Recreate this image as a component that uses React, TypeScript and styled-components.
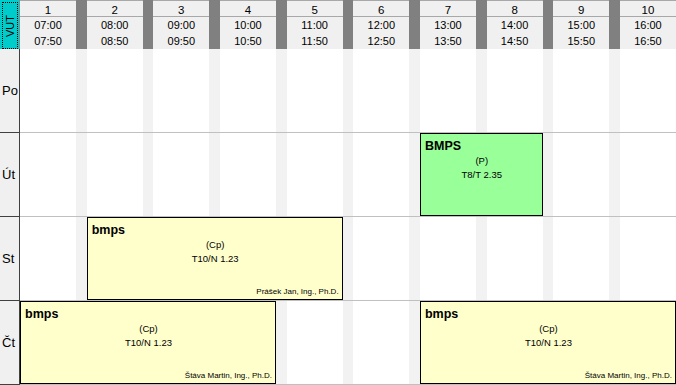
import React, { Fragment } from "react";
import styled, { createGlobalStyle } from "styled-components";

const GlobalStyle = createGlobalStyle`
  html, body {
    margin: 0;
    padding: 0;
    background: #ffffff;
    overflow: hidden;
  }
  body {
    font-family: "Liberation Sans", Arial, sans-serif;
    color: #000;
  }
`;

const COLS = "20px repeat(10, 56px 10.6667px)";

type Period = { n: number; start: string; end: string };

const periods: Period[] = [
  { n: 1, start: "07:00", end: "07:50" },
  { n: 2, start: "08:00", end: "08:50" },
  { n: 3, start: "09:00", end: "09:50" },
  { n: 4, start: "10:00", end: "10:50" },
  { n: 5, start: "11:00", end: "11:50" },
  { n: 6, start: "12:00", end: "12:50" },
  { n: 7, start: "13:00", end: "13:50" },
  { n: 8, start: "14:00", end: "14:50" },
  { n: 9, start: "15:00", end: "15:50" },
  { n: 10, start: "16:00", end: "16:50" },
];

type Lesson = {
  from: number;
  to: number;
  title: string;
  kind: string;
  room: string;
  teacher?: string;
  tone: "lecture" | "exercise";
};

type Day = { label: string; lessons: Lesson[] };

const days: Day[] = [
  { label: "Po", lessons: [] },
  {
    label: "Út",
    lessons: [{ from: 7, to: 8, title: "BMPS", kind: "(P)", room: "T8/T 2.35", tone: "lecture" }],
  },
  {
    label: "St",
    lessons: [
      {
        from: 2,
        to: 5,
        title: "bmps",
        kind: "(Cp)",
        room: "T10/N 1.23",
        teacher: "Prášek Jan, Ing., Ph.D.",
        tone: "exercise",
      },
    ],
  },
  {
    label: "Čt",
    lessons: [
      {
        from: 1,
        to: 4,
        title: "bmps",
        kind: "(Cp)",
        room: "T10/N 1.23",
        teacher: "Štáva Martin, Ing., Ph.D.",
        tone: "exercise",
      },
      {
        from: 7,
        to: 10,
        title: "bmps",
        kind: "(Cp)",
        room: "T10/N 1.23",
        teacher: "Štáva Martin, Ing., Ph.D.",
        tone: "exercise",
      },
    ],
  },
];

const Timetable = styled.div`
  width: 686.67px;
`;

const HeaderRow = styled.div`
  display: grid;
  grid-template-columns: ${COLS};
  height: 49px;
  box-sizing: border-box;
  border-bottom: 1px solid #6a6a6a;
  background: #808080;
`;

const Corner = styled.div`
  background: #00cccc;
  border-right: 1px solid #8a8a8a;
  box-sizing: border-box;
  padding: 2px 1px 1px 2px;
  display: flex;
`;

const CornerFocus = styled.div`
  flex: 1;
  border: 1px dotted #000;
  display: flex;
  align-items: center;
  justify-content: center;
`;

const CornerText = styled.span`
  writing-mode: vertical-rl;
  transform: rotate(180deg);
  font-size: 11px;
  line-height: 12px;
  color: #000;
`;

const HeaderCell = styled.div`
  background: #f0f0f0;
  border-top: 1px solid #a8a8a8;
  border-bottom: 1px solid #a8a8a8;
  box-sizing: border-box;
  display: flex;
  flex-direction: column;
  font-size: 11px;
  text-align: center;
  color: #000;
`;

const PeriodNumber = styled.div`
  height: 16px;
  box-sizing: border-box;
  padding-top: 3px;
  line-height: 12px;
  font-size: 11.5px;
  border-bottom: 1px solid #a8a8a8;
`;

const PeriodTimes = styled.div`
  display: flex;
  flex-direction: column;
  padding-top: 1px;
  line-height: 15.5px;
`;

const HeaderGap = styled.div`
  background: #808080;
`;

const DayRow = styled.div`
  display: grid;
  grid-template-columns: ${COLS};
  grid-template-rows: 84px;
`;

const DayLabel = styled.div`
  grid-column: 1;
  grid-row: 1;
  background: #f0f0f0;
  border-right: 1px solid #404040;
  border-bottom: 1px solid #404040;
  box-sizing: border-box;
  display: flex;
  align-items: center;
  padding-left: 2px;
  font-size: 13px;
`;

const Slot = styled.div<{ $col: number; $gap?: boolean }>`
  grid-column: ${(p) => p.$col};
  grid-row: 1;
  background: ${(p) => (p.$gap ? "#f2f2f2" : "#ffffff")};
  border-bottom: 1px solid #c0c0c0;
  box-sizing: border-box;
`;

const LessonBox = styled.div<{ $from: number; $to: number; $tone: "lecture" | "exercise" }>`
  grid-column: ${(p) => 2 * p.$from} / ${(p) => 2 * p.$to + 1};
  grid-row: 1;
  align-self: start;
  height: 83px;
  box-sizing: border-box;
  border: 1px solid #000;
  background: ${(p) => (p.$tone === "lecture" ? "#99ff99" : "#ffffcc")};
  display: flex;
  flex-direction: column;
  padding: 0 3px 2px 4px;
  z-index: 1;
  overflow: hidden;
`;

const LessonTitle = styled.div`
  margin-top: 4px;
  font-weight: bold;
  font-size: 12.5px;
  line-height: 16px;
`;

const LessonLine = styled.div`
  font-size: 9.5px;
  line-height: 14px;
  text-align: center;
`;

const LessonTeacher = styled.div`
  margin-top: auto;
  font-size: 8px;
  line-height: 10px;
  text-align: right;
  white-space: nowrap;
`;

export default function App() {
  return (
    <>
      <GlobalStyle />
      <Timetable>
        <HeaderRow>
          <Corner>
            <CornerFocus>
              <CornerText>VUT</CornerText>
            </CornerFocus>
          </Corner>
          {periods.map((p) => (
            <Fragment key={p.n}>
              <HeaderCell>
                <PeriodNumber>{p.n}</PeriodNumber>
                <PeriodTimes>
                  <span>{p.start}</span>
                  <span>{p.end}</span>
                </PeriodTimes>
              </HeaderCell>
              <HeaderGap />
            </Fragment>
          ))}
        </HeaderRow>
        {days.map((d) => (
          <DayRow key={d.label}>
            <DayLabel>{d.label}</DayLabel>
            {periods.map((p) => (
              <Fragment key={p.n}>
                <Slot $col={2 * p.n} />
                <Slot $col={2 * p.n + 1} $gap />
              </Fragment>
            ))}
            {d.lessons.map((l, i) => (
              <LessonBox key={i} $from={l.from} $to={l.to} $tone={l.tone}>
                <LessonTitle>{l.title}</LessonTitle>
                <LessonLine>{l.kind}</LessonLine>
                <LessonLine>{l.room}</LessonLine>
                {l.teacher && <LessonTeacher>{l.teacher}</LessonTeacher>}
              </LessonBox>
            ))}
          </DayRow>
        ))}
      </Timetable>
    </>
  );
}
